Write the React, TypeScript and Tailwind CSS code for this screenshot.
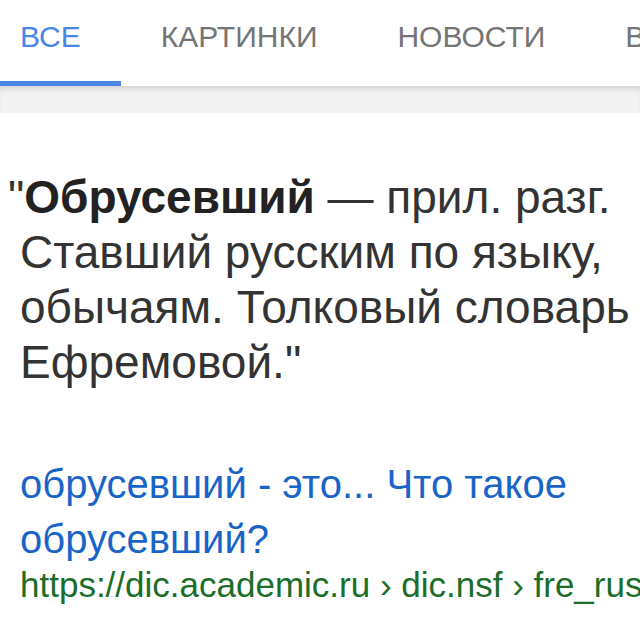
import React from 'react';

const tabs = ['ВСЕ', 'КАРТИНКИ', 'НОВОСТИ', 'ВИДЕО'];

const App: React.FC = () => {
  return (
    <div className="w-[640px] h-[640px] overflow-hidden bg-white" style={{ fontFamily: '"Liberation Sans", Arial, sans-serif' }}>
      {/* tabs */}
      <div className="flex ml-[-20px] whitespace-nowrap h-[86px] bg-white">
        {tabs.map((t, i) => (
          <div
            key={t}
            className={
              i === 0
                ? 'px-10 pt-[20px] text-[30px] leading-[34px] text-[#4a86e8] border-b-[5px] border-[#4a86e8]'
                : 'px-10 pt-[20px] text-[30px] leading-[34px] text-[#757575]'
            }
          >
            {t}
          </div>
        ))}
      </div>
      <div className="h-[27px] bg-[#f2f2f2] shadow-[inset_0_6px_6px_-4px_rgba(0,0,0,0.16)]" />

      {/* snippet */}
      <div className="pl-5 pr-1 pt-[57px] text-[46px] leading-[55px] text-[#333] indent-[-12px]">
        "<b className="font-bold text-[#222]">Обрусевший</b> — прил. разг. Ставший русским по языку, обычаям. Толковый словарь Ефремовой."
      </div>

      {/* result link */}
      <div className="pl-5 pt-[67px]">
        <div className="text-[40px] leading-[55px] text-[#1a64c8]">обрусевший - это... Что такое обрусевший?</div>
        <div className="text-[35px] leading-[36px] text-[#1b6d2a] whitespace-nowrap">
          https://dic.academic.ru › dic.nsf › fre_rus
        </div>
      </div>
    </div>
  );
};

export default App;
